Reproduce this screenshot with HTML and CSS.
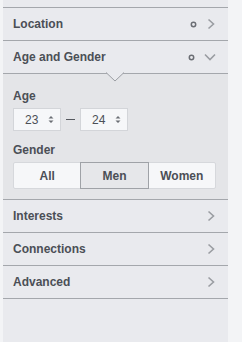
FILE: index.html
```html
<!DOCTYPE html>
<html>
<head>
<meta charset="utf-8">
<link rel="stylesheet" href="styles.css">
</head>
<body>
<div class="panel">
  <div class="row">
    <span class="label">Location</span>
    <span class="icons">
      <svg class="dot" width="7" height="7" viewBox="0 0 7 7"><circle cx="3.5" cy="3.5" r="2.2" fill="none" stroke="#6b6e74" stroke-width="1.5"/></svg>
      <svg class="chev" width="10" height="12" viewBox="0 0 10 12"><path d="M2.5 1.5 L7.5 6 L2.5 10.5" fill="none" stroke="#9a9da2" stroke-width="1.6"/></svg>
    </span>
  </div>
  <div class="row open">
    <span class="label">Age and Gender</span>
    <span class="icons">
      <svg class="dot" width="7" height="7" viewBox="0 0 7 7"><circle cx="3.5" cy="3.5" r="2.2" fill="none" stroke="#6b6e74" stroke-width="1.5"/></svg>
      <svg class="chev" width="12" height="10" viewBox="0 0 12 10"><path d="M1 2.5 L6 7.5 L11 2.5" fill="none" stroke="#9a9da2" stroke-width="1.6"/></svg>
    </span>
    <svg class="notch" width="18" height="10" viewBox="0 0 18 10"><path d="M0 0.5 L9 9 L18 0.5" fill="#e9eaee" stroke="#9b9ea3" stroke-width="1"/></svg>
  </div>
  <div class="content">
    <div class="sub">Age</div>
    <div class="ages">
      <div class="sel">23<svg width="6" height="9" viewBox="0 0 6 9"><path d="M0.5 3.5 L3 1 L5.5 3.5 Z M0.5 5.5 L3 8 L5.5 5.5 Z" fill="#6b6e74"/></svg></div>
      <div class="dash"></div>
      <div class="sel">24<svg width="6" height="9" viewBox="0 0 6 9"><path d="M0.5 3.5 L3 1 L5.5 3.5 Z M0.5 5.5 L3 8 L5.5 5.5 Z" fill="#6b6e74"/></svg></div>
    </div>
    <div class="sub gender">Gender</div>
    <div class="seg">
      <div class="opt">All</div>
      <div class="opt on">Men</div>
      <div class="opt">Women</div>
    </div>
  </div>
  <div class="row">
    <span class="label">Interests</span>
    <span class="icons"><svg class="chev" width="10" height="12" viewBox="0 0 10 12"><path d="M2.5 1.5 L7.5 6 L2.5 10.5" fill="none" stroke="#9a9da2" stroke-width="1.6"/></svg></span>
  </div>
  <div class="row">
    <span class="label">Connections</span>
    <span class="icons"><svg class="chev" width="10" height="12" viewBox="0 0 10 12"><path d="M2.5 1.5 L7.5 6 L2.5 10.5" fill="none" stroke="#9a9da2" stroke-width="1.6"/></svg></span>
  </div>
  <div class="row">
    <span class="label">Advanced</span>
    <span class="icons"><svg class="chev" width="10" height="12" viewBox="0 0 10 12"><path d="M2.5 1.5 L7.5 6 L2.5 10.5" fill="none" stroke="#9a9da2" stroke-width="1.6"/></svg></span>
  </div>
</div>
</body>
</html>
```
FILE: styles.css
```css
html, body {
  margin: 0;
  padding: 0;
}
body {
  background: #f3f4f6;
  width: 242px;
  height: 342px;
  overflow: hidden;
  font-family: "Liberation Sans", Arial, sans-serif;
  color: #4b4f56;
}
.panel {
  margin-left: 3px;
  width: 225px;
  height: 342px;
  background: #e9eaee;
  padding-top: 7px;
  box-sizing: border-box;
}
.row {
  position: relative;
  display: flex;
  align-items: center;
  justify-content: space-between;
  height: 32px;
  border-top: 1px solid #a4a7ac;
  padding: 0 12px 0 10px;
}
.row:last-child {
  border-bottom: 1px solid #a4a7ac;
}
.label {
  font-size: 12px;
  font-weight: bold;
  color: #4b4f56;
}
.icons {
  display: flex;
  align-items: center;
  gap: 9px;
}
.dot { display: block; }
.chev { display: block; }
.notch {
  position: absolute;
  left: 103px;
  bottom: -9px;
  z-index: 2;
}
.content {
  background: #e4e5e8;
  border-top: 1px solid #a4a7ac;
  padding: 15px 10px 10px;
  height: 126px;
  box-sizing: border-box;
}
.sub {
  font-size: 12px;
  font-weight: bold;
  line-height: 14px;
}
.ages {
  display: flex;
  align-items: center;
  margin-top: 5px;
}
.sel {
  width: 48px;
  height: 23px;
  box-sizing: border-box;
  background: #f6f7f9;
  border: 1px solid #d3d5d9;
  display: flex;
  align-items: center;
  padding-left: 11px;
  gap: 10px;
  font-size: 12px;
  color: #4b4f56;
}
.sel svg { display: block; }
.dash {
  width: 9px;
  height: 1px;
  background: #55585e;
  margin: 0 5px;
}
.gender {
  margin-top: 12px;
}
.seg {
  display: flex;
  margin-top: 5px;
  width: 203px;
  height: 27px;
  border: 1px solid #d6d8dc;
  border-radius: 2px;
  box-sizing: border-box;
  background: #f6f7f9;
}
.opt {
  flex: 1;
  display: flex;
  align-items: center;
  justify-content: center;
  font-size: 12px;
  font-weight: bold;
  color: #4b4f56;
}
.opt.on {
  background: #e6e7ea;
  border: 1px solid #9fa2a7;
  margin: -1px 0;
}
```
